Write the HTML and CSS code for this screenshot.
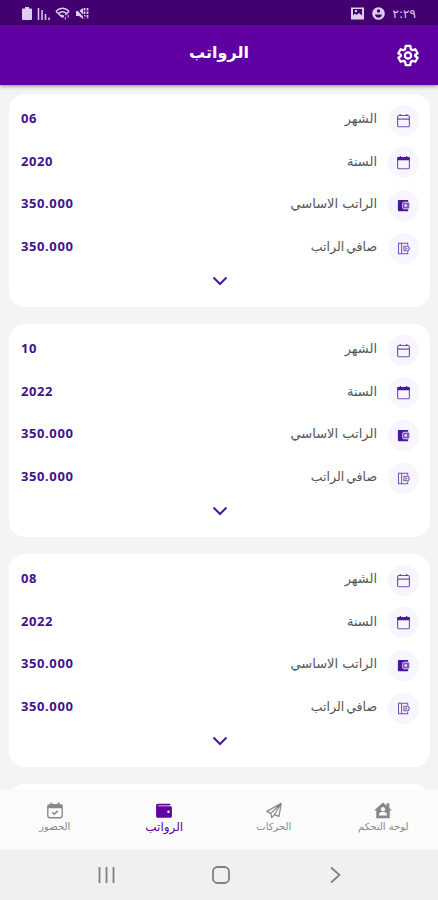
FILE: index.html
```
<!DOCTYPE html>
<html lang="ar" dir="rtl">
  <head>
    <meta charset="utf-8" />
    <meta name="viewport" content="width=device-width" />
    <title>الرواتب</title>
    <link rel="stylesheet" href="styles.css">
  </head>
  <body>
    <svg class="sprite">
      <symbol id="month" viewBox="0 0 16 16">
        <rect x="1.700" y="2.700" width="12.600" height="12" rx="1.500" fill="none" stroke="currentColor" stroke-width="1.200" opacity=".75" />
        <path d="M2 6.500h12M4.500 1v2M11.500 1v2" fill="none" stroke="currentColor" stroke-width="1.300" opacity=".75" />
      </symbol>
      <symbol id="year" viewBox="0 0 16 16">
        <rect x="1.700" y="2.700" width="12.600" height="12" rx="1.500" fill="none" stroke="currentColor" stroke-width="1.200" opacity=".75" />
        <path d="M1.500 2.200H4V1h1.300v1.200h5.400V1H12v1.200h2.500v3.300h-13z" fill="currentColor" />
      </symbol>
      <symbol id="salary" viewBox="0 0 16 16">
        <path d="M3 2h10v2H9.500Q6.700 4 6.700 6.500v3Q6.700 12 9.500 12H13v2H3Q2 14 2 13V3q0-1 1-1z" fill="currentColor" />
        <rect x="7.400" y="4.800" width="6.800" height="6.400" rx="1" fill="currentColor" opacity=".7" />
        <circle cx="10.400" cy="8" r="1.400" fill="#f8f7ff" />
      </symbol>
      <symbol id="net" viewBox="0 0 16 16">
        <path d="M12.500 4.500v-2H2.700v11h9.800v-2M6 2.500v11M8.500 5.500H13L14.300 8 13 10.500H8.500zM10 7l1.500 1L10 9" fill="none" stroke="currentColor" stroke-width="1.100" opacity=".75" />
      </symbol>
      <symbol id="down" viewBox="0 0 16 10">
        <path d="M1.500 1.500 8 8l6.500-6.500" fill="none" stroke="currentColor" stroke-width="2" />
      </symbol>
    </svg>

    <div class="status" dir="ltr">
      <div class="status-group">
        <svg width="12" height="16" viewBox="0 0 12 16"><path d="M4 1h4v1.500h2q1 0 1 1V13q0 1-1 1H2q-1 0-1-1V3.500q0-1 1-1h2z" fill="currentColor" /></svg>
        <svg width="14" height="16" viewBox="0 0 14 16"><path d="M1.500 2v12M5 4v10M8.500 8v6M12 11.500V14" stroke="currentColor" stroke-width="1.500" /></svg>
        <svg width="16" height="16" viewBox="0 0 17 16"><path d="M1 5q7-6 14 0M3.500 7.500Q8 3.500 12.500 7.500M1 5l6 6M15 5l-4 4" fill="none" stroke="currentColor" stroke-width="1.500" /><path d="m6 9 2 3 1.500-2zM11 11v3M14 9v3" stroke="currentColor" fill="currentColor" /></svg>
        <svg width="14" height="16" viewBox="0 0 14 16"><path d="M1 5h3l4-3v11l-4-3H1z" fill="currentColor" /><path d="M9.500 2v11M12.500 2v11" stroke="currentColor" stroke-width="1.800" stroke-dasharray="2.500 1" /><path d="m1 2 11 12" stroke="#430071" stroke-width="1.200" /></svg>
      </div>
      <div class="status-group status-end">
        <svg width="13" height="13" viewBox="0 0 13 13"><path d="M0 .5h13v12H0z" fill="currentColor" /><path d="M2 2h9v6.500L8 6 5.500 8 4 6.500l-2 2z" fill="#430071" /><path d="M4 3h2v2H4z" fill="currentColor" /></svg>
        <svg width="13" height="13" viewBox="0 0 13 13"><circle cx="6.500" cy="6.500" r="6.300" fill="currentColor" /><path d="M3 7.500h7q-.7 3.200-3.500 3.200T3 7.500z" fill="#430071" /><circle cx="6.500" cy="4" r="1.700" fill="#430071" /></svg>
        <span class="clock">٢:٢٩</span>
      </div>
    </div>

    <header class="topbar">
      <h1>الرواتب</h1>
      <svg class="gear" viewBox="0 0 24 24" fill="none" stroke="currentColor" stroke-width="2.500" stroke-linejoin="round">
        <path d="M9.500 1.500h5l.6 3.600 1.900 1.100 3-1 2.500 4.300-2.700 2v1l2.700 2-2.500 4.300-3-1-1.900 1.100-.6 3.600h-5l-.6-3.600L7 17.800l-3 1-2.500-4.300 2.700-2v-1l-2.700-2L4 5.200l3 1 1.900-1.100z" />
        <circle cx="12" cy="12" r="3.400" />
      </svg>
    </header>

    <main>
      <section class="card">
        <div class="row"><span class="badge"><svg><use href="#month" /></svg></span><span class="label">الشهر</span><b>06</b></div>
        <div class="row"><span class="badge"><svg><use href="#year" /></svg></span><span class="label">السنة</span><b>2020</b></div>
        <div class="row"><span class="badge"><svg><use href="#salary" /></svg></span><span class="label">الراتب الاساسي</span><b>350.000</b></div>
        <div class="row"><span class="badge"><svg><use href="#net" /></svg></span><span class="label net">صافي الراتب</span><b>350.000</b></div>
        <svg class="more"><use href="#down" /></svg>
      </section>
      <section class="card">
        <div class="row"><span class="badge"><svg><use href="#month" /></svg></span><span class="label">الشهر</span><b>10</b></div>
        <div class="row"><span class="badge"><svg><use href="#year" /></svg></span><span class="label">السنة</span><b>2022</b></div>
        <div class="row"><span class="badge"><svg><use href="#salary" /></svg></span><span class="label">الراتب الاساسي</span><b>350.000</b></div>
        <div class="row"><span class="badge"><svg><use href="#net" /></svg></span><span class="label net">صافي الراتب</span><b>350.000</b></div>
        <svg class="more"><use href="#down" /></svg>
      </section>
      <section class="card">
        <div class="row"><span class="badge"><svg><use href="#month" /></svg></span><span class="label">الشهر</span><b>08</b></div>
        <div class="row"><span class="badge"><svg><use href="#year" /></svg></span><span class="label">السنة</span><b>2022</b></div>
        <div class="row"><span class="badge"><svg><use href="#salary" /></svg></span><span class="label">الراتب الاساسي</span><b>350.000</b></div>
        <div class="row"><span class="badge"><svg><use href="#net" /></svg></span><span class="label net">صافي الراتب</span><b>350.000</b></div>
        <svg class="more"><use href="#down" /></svg>
      </section>
      <section class="card"></section>
    </main>

    <nav class="tabs">
      <a class="tab">
        <svg viewBox="0 0 20 18"><path d="M10 0 0 9h2.500v8.500h15V9H20l-3-2.700V1h-3v2.600z" fill="currentColor" /><path d="M5.500 14.500q0-4 4.500-4t4.500 4z" fill="#fbfbfb" /><circle cx="10" cy="7.500" r="2.300" fill="#fbfbfb" /></svg>
        <span>لوحة التحكم</span>
      </a>
      <a class="tab">
        <svg viewBox="0 0 20 18"><path d="M18 1 2 10l4.500 2.200L18 1l-2.500 14.500-5-2L7.500 17l-1-4.800M18 1l-7.500 12.500" fill="none" stroke="currentColor" stroke-width="1.400" stroke-linejoin="round" /></svg>
        <span>الحركات</span>
      </a>
      <a class="tab active">
        <svg viewBox="0 0 20 18"><path d="M3 1.500h14v2H3.500v.8H17q1.800 0 1.800 1.500v9.500q0 1.700-1.800 1.700H3q-1.800 0-1.800-1.700v-12Q1.200 1.500 3 1.500z" fill="currentColor" /><circle cx="15" cy="10.500" r="1.400" fill="#fbfbfb" /></svg>
        <span>الرواتب</span>
      </a>
      <a class="tab">
        <svg viewBox="0 0 20 18"><rect x="2" y="2.500" width="16" height="14.500" rx="2.500" fill="none" stroke="currentColor" stroke-width="1.500" /><path d="M2 3h16v3.500H2zM5 0h2v3H5zM13 0h2v3h-2z" fill="currentColor" /><path d="m7 11 2.200 2 4-3.500" fill="none" stroke="currentColor" stroke-width="1.700" /></svg>
        <span>الحضور</span>
      </a>
    </nav>

    <div class="system" dir="ltr">
      <svg viewBox="0 0 20 20"><path d="M2.500 2v16M9.500 2v16M16.500 2v16" /></svg>
      <svg viewBox="0 0 20 20"><rect x="2" y="2" width="16" height="16" rx="4.500" /></svg>
      <svg viewBox="0 0 20 20"><path d="m6 2.500 8.500 7.500L6 17.500" /></svg>
    </div>
  </body>
</html>
```
FILE: styles.css
```
* {
  box-sizing: border-box;
}
body {
  margin: 0;
  height: 900px;
  overflow: hidden;
  display: flex;
  flex-direction: column;
  font-family: "DejaVu Sans", sans-serif;
  background: #f2f4f6;
}
svg {
  display: block;
  flex: none;
}
.sprite {
  position: absolute;
  width: 0;
  height: 0;
}
.status {
  flex: none;
  height: 25px;
  padding: 2px 22px 0 21px;
  display: flex;
  align-items: center;
  justify-content: space-between;
  background: #430071;
  color: #e0cdec;
}
.status-group {
  display: flex;
  align-items: center;
  gap: 4px;
}
.status-end {
  gap: 8px;
}
.clock {
  font-size: 12px;
  line-height: 16px;
}
.topbar {
  flex: none;
  height: 60px;
  display: grid;
  grid-template-columns: 60px 1fr 60px;
  align-items: center;
  justify-items: center;
  background: #6000a2;
  color: #fff;
  box-shadow: 0 1px 4px rgba(0, 0, 0, 0.45);
  z-index: 1;
}
h1 {
  grid-column: 2;
  margin: 0 0 5px;
  font-size: 16px;
  line-height: 24px;
}
.gear {
  grid-column: 1;
  grid-row: 1;
  width: 22px;
  height: 23px;
}
main {
  flex: 1;
  min-height: 0;
  overflow: hidden;
  padding: 9px 8px 0 9px;
}
.card {
  height: 213px;
  margin-bottom: 17px;
  padding: 5px 11px 0 12px;
  border-radius: 16px;
  background: #fff;
}
.row {
  height: 42.6px;
  display: flex;
  align-items: center;
}
.badge {
  width: 31px;
  height: 31px;
  border-radius: 50%;
  display: grid;
  place-items: center;
  background: #f7f6ff;
  color: #4b169b;
}
.badge svg {
  width: 15px;
  height: 15px;
}
.label {
  margin: 0 11px 2px auto;
  font-size: 13px;
  line-height: 20px;
  color: #555;
}
.net {
  font-size: 12.5px;
  word-spacing: -2px;
}
.row b {
  margin-bottom: 4px;
  font-family: "Noto Sans", sans-serif;
  font-size: 13px;
  line-height: 20px;
  letter-spacing: 0.6px;
  color: #42128b;
}
.more {
  width: 16px;
  height: 10px;
  margin: 7px auto 0;
  color: #4b169b;
}
.tabs {
  flex: none;
  height: 60px;
  display: grid;
  grid-template-columns: repeat(4, 1fr);
  background: #fbfbfb;
}
.tab {
  display: flex;
  flex-direction: column;
  align-items: center;
  padding-top: 12px;
  font-size: 10px;
  line-height: 16px;
  color: #888;
  white-space: nowrap;
}
.tab svg {
  width: 18px;
  height: 17px;
}
.active {
  font-size: 12px;
  color: #60049f;
}
.system {
  flex: none;
  height: 50px;
  padding: 0 93px 0 97px;
  display: flex;
  align-items: center;
  justify-content: space-between;
  background: #f0f0f0;
}
.system svg {
  width: 20px;
  height: 20px;
  fill: none;
  stroke: #808080;
  stroke-width: 1.8;
}
```
